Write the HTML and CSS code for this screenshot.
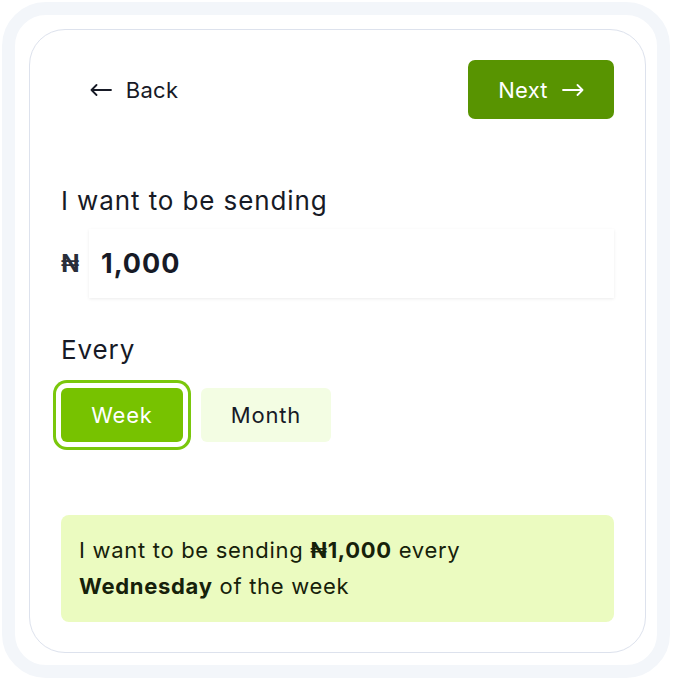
FILE: index.html
```html
<!DOCTYPE html>
<html lang="en">
  <head>
    <meta charset="UTF-8" />
    <meta name="viewport" content="width=device-width, initial-scale=1.0" />
    <title>Recurring Transfer</title>
    <link rel="stylesheet" href="styles.css">
  </head>
  <body>
    <div class="frame">
      <div class="card">
        <div class="nav">
          <button type="button" class="btn btn-back">
            <svg class="arrow" viewBox="0 0 22 12" width="22" height="12"><path d="M21 6H1.5M6.5 1L1.5 6l5 5" /></svg>
            Back
          </button>
          <button type="button" class="btn btn-next">
            Next
            <svg class="arrow" viewBox="0 0 22 12" width="22" height="12"><path d="M1 6h19.5M15.5 1l5 5-5 5" /></svg>
          </button>
        </div>

        <label class="field-label" for="amount">I want to be sending</label>
        <div class="amount-row">
          <span class="currency">&#8358;</span>
          <input type="text" id="amount" class="amount-input" value="1,000" />
        </div>

        <div class="field-label every">Every</div>
        <div class="period-options">
          <button type="button" class="period active">Week</button>
          <button type="button" class="period">Month</button>
        </div>

        <div class="summary">
          I want to be sending <strong>&#8358;1,000</strong> every<br />
          <strong>Wednesday</strong> of the week
        </div>
      </div>
    </div>
  </body>
</html>
```

FILE: styles.css
```css
body {
  margin: 0;
  font-family: Inter, "Noto Sans", sans-serif;
  color: #171a26;
  background: #fff;
}
.frame {
  margin: 2px;
  width: 668px;
  height: 676px;
  box-sizing: border-box;
  border: 13px solid #f3f6fa;
  border-radius: 44px;
  padding: 14px 11px 11px 14px;
}
.card {
  border: 1px solid #dde2ed;
  border-radius: 36px;
  padding: 30px 31px;
}
.nav {
  display: flex;
  justify-content: space-between;
}
.btn {
  display: flex;
  align-items: center;
  justify-content: center;
  gap: 14px;
  width: 146px;
  height: 59px;
  border: none;
  border-radius: 7px;
  font-family: inherit;
  font-size: 22px;
  letter-spacing: 0.3px;
  cursor: pointer;
}
.arrow {
  fill: none;
  stroke: currentColor;
  stroke-width: 1.8;
  stroke-linecap: round;
  stroke-linejoin: round;
}
.btn-back {
  background: transparent;
  color: #171a26;
}
.btn-next {
  background: #589401;
  color: #fff;
}
.field-label {
  display: block;
  margin-top: 66px;
  font-size: 26px;
  line-height: 32px;
  letter-spacing: 0.9px;
}
.amount-row {
  display: flex;
  align-items: center;
  gap: 7px;
  margin-top: 12px;
}
.currency {
  width: 21px;
  font-size: 24px;
  font-weight: 700;
  color: #2a2e3a;
}
.amount-input {
  flex: 1;
  height: 69px;
  box-sizing: border-box;
  border: none;
  padding: 0 12px;
  font-family: inherit;
  font-size: 27px;
  font-weight: 700;
  letter-spacing: 1px;
  color: #171a26;
  box-shadow: 0 1px 3px rgba(0, 0, 0, 0.08);
  outline: none;
}
.every {
  margin-top: 36px;
}
.period-options {
  display: flex;
  gap: 18px;
  margin-top: 22px;
}
.period {
  width: 130px;
  height: 54px;
  border: none;
  border-radius: 6px;
  background: #f3fde3;
  color: #171a26;
  font-family: inherit;
  font-size: 22px;
  letter-spacing: 0.8px;
  cursor: pointer;
}
.period.active {
  width: 122px;
  background: #77c200;
  color: #fff;
  box-shadow: 0 0 0 5px #fff, 0 0 0 8px #7ac70c;
}
.summary {
  margin-top: 73px;
  padding: 17px 18px 18px;
  background: #ebfbc0;
  border-radius: 8px;
  font-size: 22px;
  line-height: 36px;
  letter-spacing: 0.7px;
  color: #16210a;
}
.summary strong {
  font-weight: 700;
}
```
